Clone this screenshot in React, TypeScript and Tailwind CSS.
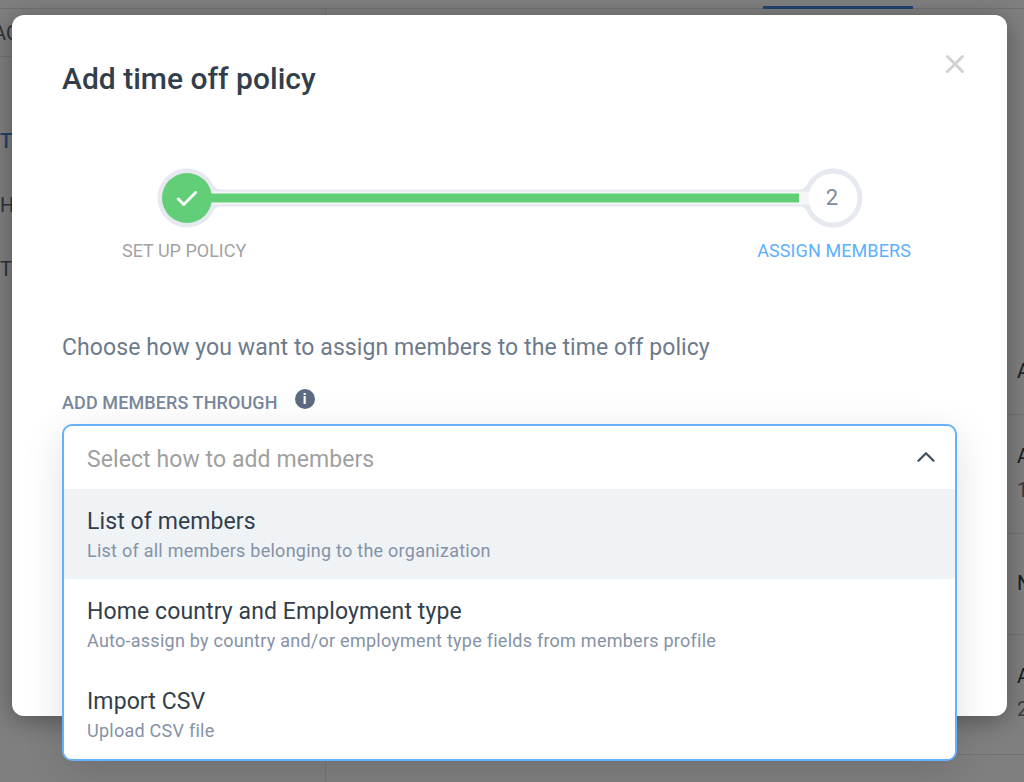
import { Check, ChevronUp, X } from "lucide-react";

const font = { fontFamily: "Roboto, 'Noto Sans', sans-serif" };

function Stepper() {
  return (
    <svg width="706" height="60" viewBox="0 0 706 60" className="block">
      <path
        d="M64 21.5 Q57 21.5 54.2 13.1 A29.5 29.5 0 1 0 54.2 46.9 Q57 38.5 64 38.5 L642 38.5 Q649 38.5 651.8 46.9 A29.5 29.5 0 1 0 651.8 13.1 Q649 21.5 642 21.5 Z"
        fill="#e6e9ef"
      />
      <rect x="50" y="23.5" width="606" height="13" fill="#f4f6f8" />
      <circle cx="30" cy="30" r="25" fill="#62cf78" />
      <path d="M50 25.5 L642 25.5 L642 34.5 L50 34.5 Z" fill="#62cf78" />
      <circle cx="676" cy="30" r="24.5" fill="#ffffff" />
    </svg>
  );
}

function Option({ title, sub, active }: { title: string; sub: string; active?: boolean }) {
  return (
    <div className={`flex h-[90px] flex-col justify-center pl-[23px] pt-[2px] ${active ? "bg-[#eff3f6]" : "bg-white"}`}>
      <div className="text-[23px] leading-[30px] tracking-[0.1px] text-[#323e4c]">{title}</div>
      <div className="mt-[2px] text-[18px] leading-[24px] tracking-[0.25px] text-[#8592a6]">{sub}</div>
    </div>
  );
}

export default function App() {
  return (
    <div className="relative h-[782px] w-[1024px] overflow-hidden bg-white text-[#2e3a48]" style={font}>
      <div className="h-[9px] border-b border-[#dfe3e8]">
        <div className="ml-[763px] h-[3px] translate-y-[6px] w-[150px] bg-[#3f87e0]" />
      </div>
      <div className="flex h-[773px]">
        <div className="w-[325px] shrink-0 text-[20px] text-[#5b6675]">
          <div className="flex h-[48px] items-center border-b border-[#e3e6ea]">
            <span className="-ml-[7px]">AC</span>
          </div>
          <div className="mt-[69px] h-[28px] font-medium text-[#3f87e0]">T</div>
          <div className="mt-[36px] h-[28px]">H</div>
          <div className="mt-[36px] h-[28px]">T</div>
        </div>
        <div className="flex-1 border-l border-[#e3e6ea] text-[20px]">
          <div className="mt-[341px] h-[65px] border-b border-[#e3e6ea] pl-[691px] pt-[7px] leading-[28px]">A</div>
          <div className="h-[119px] border-b border-[#e3e6ea] pl-[691px] pt-[27px] leading-[28px]">
            A<div className="mt-[6px] text-[#6f7a8a]">1</div>
          </div>
          <div className="h-[101px] border-b border-[#e3e6ea] pl-[691px] pt-[35px] leading-[28px]">N</div>
          <div className="h-[120px] border-b border-[#e3e6ea] pl-[691px] pt-[27px] leading-[28px]">
            A<div className="mt-[5px] text-[#6f7a8a]">2</div>
          </div>
        </div>
      </div>

      <div className="absolute inset-0 bg-black/50" />

      <div className="absolute left-[12px] top-[15px] h-[701px] w-[995px] rounded-[12px] bg-white pl-[50px] pr-[50px] pt-[46px] shadow-[0_4px_24px_rgba(0,0,0,0.35)]">
        <button className="absolute right-[37px] top-[34px] text-[#d2d2d2]">
          <X size={30} strokeWidth={2.4} />
        </button>
        <h1 className="text-[30px] font-medium leading-[36px] text-[#323e4c]">Add time off policy</h1>

        <div className="relative ml-[95px] mt-[71px] w-[706px]">
          <Stepper />
          <div className="absolute left-0 top-0 flex h-[60px] w-[60px] translate-y-[1px] items-center justify-center text-white">
            <Check size={26} strokeWidth={2.6} />
          </div>
          <div className="absolute right-0 top-0 flex h-[60px] w-[60px] -translate-x-[1px] -translate-y-[1px] items-center justify-center text-[22px] text-[#7f8a9b]">
            2
          </div>
        </div>
        <div className="ml-[60px] mt-[11px] flex w-[789px] justify-between text-[18px] leading-[24px]">
          <span className="text-[#a3a3a3]">SET UP POLICY</span>
          <span className="tracking-[0.1px] text-[#5fb0fa]">ASSIGN MEMBERS</span>
        </div>

        <p className="mt-[69px] text-[23px] leading-[32px] tracking-[0.08px] text-[#6d7a8b]">
          Choose how you want to assign members to the time off policy
        </p>
        <div className="mt-[26px] flex h-[24px] items-center gap-[17px] text-[18px] font-medium tracking-[0.1px] text-[#7a879b]">
          <span>ADD MEMBERS THROUGH</span>
          <span className="flex h-[20px] w-[20px] -translate-y-[3px] items-center justify-center rounded-full bg-[#5c6a82] text-white">
            <span className="text-[14px] font-bold leading-none">i</span>
          </span>
        </div>

        <div className="relative z-10 mt-[10px] h-[337px] w-[895px] overflow-hidden rounded-[10px] border-2 border-[#68b0fb] bg-white shadow-[0_10px_40px_rgba(0,0,0,0.12)]">
          <div className="flex h-[63px] items-center justify-between pl-[23px] pr-[14px]">
            <span className="translate-y-[3px] text-[23px] tracking-[0.08px] text-[#a0a0a0]">Select how to add members</span>
            <ChevronUp size={30} strokeWidth={1.9} className="-translate-y-[1px] text-[#475260]" />
          </div>
          <Option active title="List of members" sub="List of all members belonging to the organization" />
          <Option title="Home country and Employment type" sub="Auto-assign by country and/or employment type fields from members profile" />
          <Option title="Import CSV" sub="Upload CSV file" />
        </div>
      </div>
    </div>
  );
}
